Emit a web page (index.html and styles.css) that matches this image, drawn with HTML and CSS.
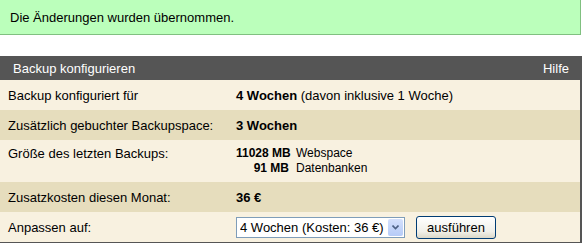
FILE: index.html
```html
<!DOCTYPE html>
<html lang="de">
<head>
    <meta charset="UTF-8">
    <title>Backup konfigurieren</title>
    <link rel="stylesheet" href="styles.css">
</head>
<body>
    <div class="notice">Die Änderungen wurden übernommen.</div>

    <div class="panel">
        <div class="panel-head">
            <span>Backup konfigurieren</span>
            <span>Hilfe</span>
        </div>
        <table class="config">
            <tr class="light">
                <td class="label">Backup konfiguriert für</td>
                <td><b>4 Wochen</b> (davon inklusive 1 Woche)</td>
            </tr>
            <tr class="dark">
                <td class="label">Zusätzlich gebuchter Backupspace:</td>
                <td><b>3 Wochen</b></td>
            </tr>
            <tr class="light sizes">
                <td class="label">Größe des letzten Backups:</td>
                <td>
                    <div class="size-row"><b class="mb">11028 MB</b>Webspace</div>
                    <div class="size-row"><b class="mb">91 MB</b>Datenbanken</div>
                </td>
            </tr>
            <tr class="dark">
                <td class="label">Zusatzkosten diesen Monat:</td>
                <td><b>36 €</b></td>
            </tr>
            <tr class="light">
                <td class="label">Anpassen auf:</td>
                <td>
                    <form class="adjust">
                        <span class="select-wrap">
                            <select>
                                <option>4 Wochen (Kosten: 36 €)</option>
                            </select>
                            <span class="select-arrow">
                                <svg width="7" height="5" viewBox="0 0 7 5">
                                    <path d="M0.5 0.5 L3.5 3.5 L6.5 0.5" fill="none" stroke="#4d6185" stroke-width="1.6"/>
                                </svg>
                            </span>
                        </span>
                        <button type="button">ausführen</button>
                    </form>
                </td>
            </tr>
        </table>
    </div>
</body>
</html>
```

FILE: styles.css
```css
body {
    font-family: 'Liberation Sans', Arial, sans-serif;
    font-size: 13px;
    margin: 0;
    padding: 0;
    background-color: white;
    color: #000;
}

.notice {
    width: 581px;
    height: 35px;
    box-sizing: border-box;
    background-color: #bbffbb;
    border-right: 1px solid #80c080;
    border-bottom: 1px solid #80c080;
    padding: 10px 0 0 10px;
}

.panel {
    width: 582px;
    box-sizing: border-box;
    margin-top: 21px;
    border-right: 2px solid #555;
    border-bottom: 2px solid #555;
}

.panel-head {
    display: flex;
    justify-content: space-between;
    height: 24px;
    align-items: center;
    background-color: #555;
    color: white;
    padding: 0 11px 0 13px;
}

.config {
    width: 100%;
    border-collapse: collapse;
}

.config td {
    height: 30px;
    padding: 0;
    vertical-align: middle;
    white-space: nowrap;
}

.config td.label {
    width: 228px;
    padding-left: 8px;
}

.config tr.light {
    background-color: #f8f1e0;
}

.config tr.dark {
    background-color: #e6ddbd;
}

.config tr.sizes td {
    height: 36px;
    vertical-align: top;
    padding-top: 6px;
}

.size-row {
    font-size: 12px;
    line-height: 15px;
}

.size-row .mb {
    display: inline-block;
    width: 53px;
    text-align: right;
    margin-right: 7px;
}

.adjust {
    display: flex;
    align-items: center;
    gap: 11px;
    margin: 0;
}

.select-wrap {
    position: relative;
    display: inline-block;
}

.select-wrap select {
    appearance: none;
    -webkit-appearance: none;
    font-family: inherit;
    font-size: 13px;
    width: 169px;
    height: 21px;
    border: 1px solid #7f9db9;
    border-radius: 0;
    background-color: white;
    padding: 0 0 0 3px;
    color: #000;
    display: block;
}

.select-arrow {
    position: absolute;
    top: 2px;
    right: 2px;
    width: 15px;
    height: 17px;
    background: linear-gradient(#d4e0fc, #b6cbf7);
    border-radius: 2px;
    display: flex;
    align-items: center;
    justify-content: center;
    pointer-events: none;
}

.select-arrow svg {
    display: block;
}

.adjust button {
    font-family: inherit;
    font-size: 13px;
    width: 80px;
    height: 23px;
    border: 1px solid #003c74;
    border-radius: 3px;
    background: linear-gradient(#fff, #f0efe8 70%, #dcd8c8);
    padding: 0;
    color: #000;
}
```
